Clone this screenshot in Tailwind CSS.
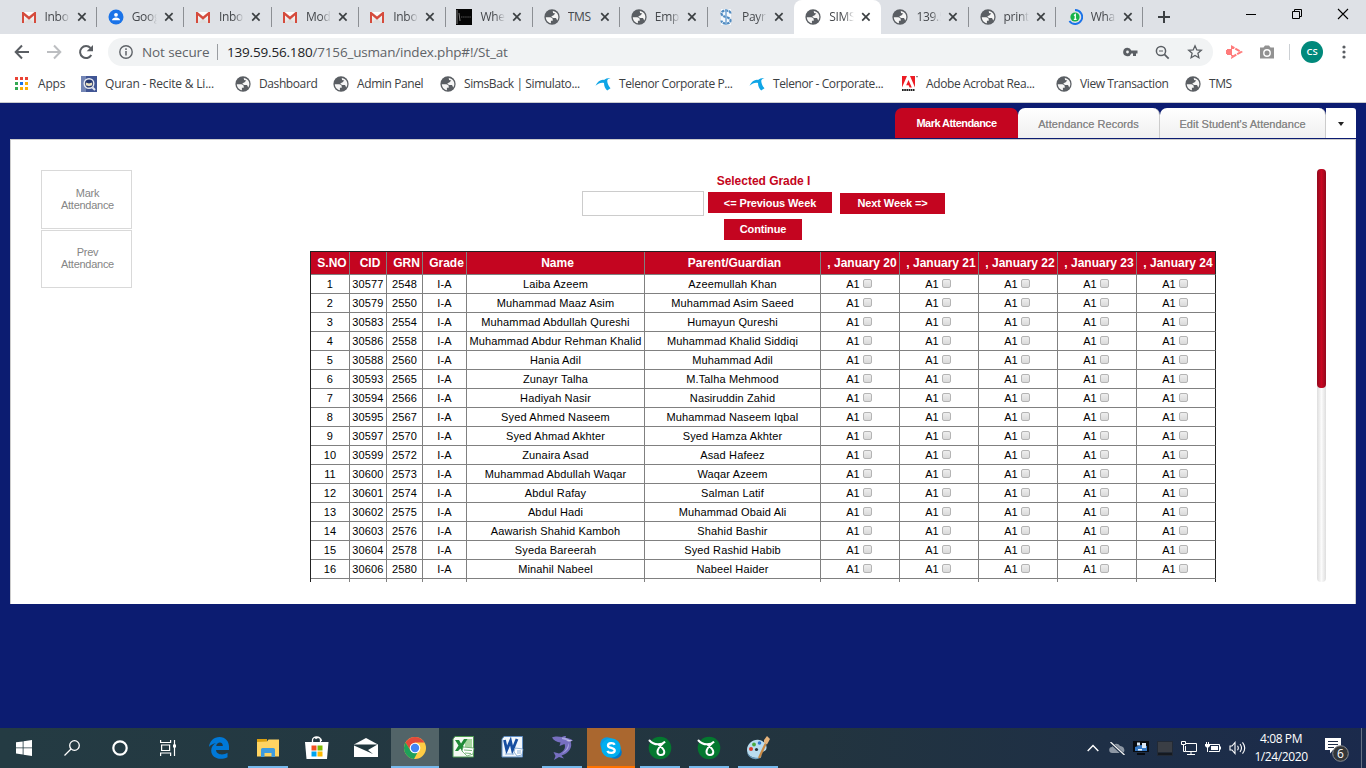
<!DOCTYPE html>
<html lang="en">
<head>
<meta charset="utf-8">
<title>SIMS - Mark Attendance</title>
<script src="https://cdn.jsdelivr.net/npm/@tailwindcss/browser@4"></script>
</head>
<body class="w-[1366px] h-[768px] overflow-hidden flex flex-col bg-[#0c1c71] font-['Open_Sans',sans-serif]">
<svg width="0" height="0" class="absolute">
  <defs>
    <linearGradient id="cam" x1="0" y1="0" x2="0" y2="1"><stop offset="0" stop-color="#fff"/><stop offset="1" stop-color="#e2e2e2"/></linearGradient>
    <symbol id="globe" viewBox="1 1 22 22"><circle cx="12" cy="12" r="10.500" fill="#5a5e63"/><path fill="#f6f6f6" d="M3.500 12.500h6c2 0 3.500 1.300 3.500 3V17h-2.500v3.700C6.500 20 3.500 16.500 3.500 12.500zM13 3.800c4.500.5 7.700 4 7.700 8.200 0 1.800-.6 3.500-1.500 4.700l-1.700-3.200h-4.300L11 11l2.800-1.200 2.700-2.600-3-.8z"/></symbol>
    <symbol id="gmail" viewBox="0 0 16 16"><path fill="url(#cam)" d="M1 3h14v11H1z"/><path fill="#dedede" d="M3 14l5-4.500L13 14z"/><path fill="#d54b3d" d="M1 3h1.500L8 7.500 13.500 3H15v11h-2V6.500L8 10.700 3 6.500V14H1z"/></symbol>
    <symbol id="contact" viewBox="0 0 16 16"><circle cx="8" cy="8" r="7.500" fill="#1a73e8"/><circle cx="8" cy="5.800" r="1.900" fill="#fff"/><path fill="#fff" d="M4 11.200c0-1.700 2-2.700 4-2.700s4 1 4 2.700z"/></symbol>
    <symbol id="black" viewBox="0 0 16 16"><path d="M0 0h16v16H0z" fill="#050505"/><path stroke="#999" stroke-width=".8" d="M1 1v14M3 4l1 8"/><path stroke="#555" stroke-dasharray="1.500 .6" d="M5 8h10"/></symbol>
    <symbol id="pay" viewBox="0 0 16 16"><path d="M3 0h10v16H3z" fill="#f4f8fc"/><path fill="none" stroke="#4f8ac0" stroke-width="2.200" stroke-dasharray="3 .7" d="M12.500 4.500c0-4-9-4-9 0s9 3 9 7-9 4-9 0"/><path stroke="#77a7d4" stroke-width="1.500" d="M8 0v16"/></symbol>
    <symbol id="wha" viewBox="0 0 16 16"><circle cx="8" cy="8" r="4.600" fill="#16b34a"/><path fill="none" stroke="#1a73e8" stroke-width="1.900" d="M8 1a7 7 0 1 1-5.600 11"/><path stroke="#fff" stroke-width="1.300" fill="none" d="M7 6.500l1.300-1V10.500M6.800 10.400h2.800"/></symbol>
    <symbol id="telenor" viewBox="0 0 16 16"><path fill="#0fa5e6" d="M.5 9.800C2.500 5.500 6 3.300 9 4c1.500-1.500 4-2.200 6.500-2-1.800.5-3 1.400-3.300 2.800.3 3 1.300 5.500 3.300 7.400l-3.300 2.300C10.200 13 9 10 9 7 6 6.200 3.500 7.500.5 9.800z"/></symbol>
    <symbol id="quran" viewBox="0 0 16 16"><path d="M0 0h16v16H0z" fill="#405594"/><path d="M0 0h5v16H0z" fill="#7385b4"/><circle cx="8" cy="7.500" r="4.800" fill="#25376f" stroke="#e5e8f0" stroke-width="1.400"/><path fill="#e8dfc0" d="M4.800 6.500L8 7.500l3.200-1v2.800L8 10.200 4.800 9.300z"/><path stroke="#e5e8f0" stroke-width="2" d="M11.500 11.500l2.500 2.500"/></symbol>
    <symbol id="apps" viewBox="0 0 16 16"><path fill="#ea4335" d="M1 1h3v3H1zM6 1h3v3H6zM11 1h3v3h-3z"/><path fill="#34a853" d="M1 6h3v3H1zM1 11h3v3H1z"/><path fill="#1a73e8" d="M6 6h3v3H6z"/><path fill="#fbaf05" d="M11 6h3v3h-3zM6 11h3v3H6zM11 11h3v3h-3z"/></symbol>
    <symbol id="adobe" viewBox="0 0 16 16"><path fill="#ed1c24" d="M0 0h5L0 11.500zM8 0h5v11.500zM6.500 4l3.300 7.500H7.600l-1-2.300H4.200z"/><path stroke="#222" stroke-width="2.200" stroke-dasharray="1.700 .5" d="M0 14h12.500"/><path stroke="#777" stroke-width="1" d="M14 .7h2"/></symbol>
    <symbol id="close" viewBox="0 0 10 10"><path stroke="#3c4043" stroke-width="1.700" d="M1.200 1.200l7.400 7.400M8.600 1.200L1.200 8.600"/></symbol>
    <symbol id="camt" viewBox="0 0 24 24"><circle cx="12" cy="12" r="11.300" fill="#04782f"/><path fill="none" stroke="#fff" stroke-width="2" stroke-linecap="round" d="M1.500 4.500C4 7.500 7 8.300 10 8.300c3.500 0 5.700-1 7-2.600-3 2.500-7.500 6-7.500 10.300 0 4.200 6.800 4 6.800 0 0-3.300-3-4.800-5.800-7.500"/></symbol>
  </defs>
</svg>

<!-- Tab strip -->
<header class="h-[34px] shrink-0 bg-[#dee1e6] flex pl-[9px]">
  <div id="tabs" class="flex h-full"></div>
  <svg class="w-[16px] h-[16px] mt-[9px] ml-[14px]" viewBox="0 0 16 16"><path stroke="#3c4043" stroke-width="2" d="M8 2v12M2 8h12"/></svg>
  <div class="ml-auto mt-[8px] mr-[17px] flex gap-[34px]">
    <svg class="w-[12px] h-[12px]" viewBox="0 0 12 12"><path stroke="#000" d="M1 6.500h10"/></svg>
    <svg class="w-[12px] h-[12px]" viewBox="0 0 12 12"><path fill="none" stroke="#000" d="M1.500 3.500h7v7h-7zM3.500 3.500v-2h7v7h-2"/></svg>
    <svg class="w-[12px] h-[12px]" viewBox="0 0 12 12"><path stroke="#000" stroke-width="1.100" d="M1 1l10 10M11 1L1 11"/></svg>
  </div>
</header>

<!-- Address bar -->
<div class="h-[36px] shrink-0 bg-white flex items-center pl-[14px]">
  <svg class="w-[16px] h-[16px]" viewBox="0 0 16 16"><path fill="none" stroke="#5a5e63" stroke-width="2" d="M15 8H2M8 1.500L1.700 8 8 14.500"/></svg>
  <svg class="w-[16px] h-[16px] ml-[16px]" viewBox="0 0 16 16"><path fill="none" stroke="#bcbec1" stroke-width="2" d="M1 8h13M8 1.500L14.300 8 8 14.500"/></svg>
  <svg class="w-[16px] h-[16px] ml-[16px]" viewBox="0 0 16 16"><path fill="none" stroke="#5a5e63" stroke-width="2" d="M13.300 11A6 6 0 1 1 12.500 4"/><path fill="#5a5e63" d="M15 1v6.300H8.700z"/></svg>
  <div class="ml-[14px] w-[1105px] h-[28px] rounded-full bg-[#f1f3f4] flex items-center pl-[11px] pr-[10px] text-[14px] text-[#5f6368] whitespace-nowrap">
    <svg class="w-[14px] h-[14px]" viewBox="0 0 14 14"><circle cx="7" cy="7" r="6.200" fill="none" stroke="#5f6368" stroke-width="1.400"/><path stroke="#5f6368" stroke-width="1.500" d="M7 6v4.500M7 3.300v1.600"/></svg>
    <span class="ml-[9px] w-[75px] text-[13.500px] tracking-[-0.1px]">Not secure</span>
    <i class="w-px h-[16px] bg-[#9a9da1]"></i>
    <span class="ml-[9px] text-[13.500px] tracking-[-0.18px]"><b class="font-normal text-[#202124]">139.59.56.180</b>/7156_usman/index.php#!/St_at</span>
    <svg class="ml-auto w-[15px] h-[10px]" viewBox="0 0 15 10"><path fill="#5a5e63" fill-rule="evenodd" d="M4.500.8A4.200 4.200 0 1 0 8.300 6.500H10V9h3V6.500h1.500v-3H8.300A4.200 4.200 0 0 0 4.500.8zm0 2.800a1.400 1.400 0 1 1 0 2.800 1.400 1.400 0 0 1 0-2.800z"/></svg>
    <svg class="ml-[17px] w-[15px] h-[15px]" viewBox="0 0 15 15"><circle cx="6" cy="6" r="4.600" fill="none" stroke="#5a5e63" stroke-width="1.500"/><path stroke="#5a5e63" stroke-width="1.700" d="M9.400 9.400l4.300 4.300"/><path stroke="#5a5e63" d="M4 6h4"/></svg>
    <svg class="ml-[17px] w-[16px] h-[16px]" viewBox="0 0 16 16"><path fill="none" stroke="#5a5e63" stroke-width="1.300" d="M8 1.800l1.800 4.100 4.500.4-3.400 3 1 4.400L8 11.400l-3.900 2.300 1-4.400-3.400-3 4.500-.4z"/></svg>
  </div>
  <svg class="ml-[13px] w-[17px] h-[14px]" viewBox="0 0 17 14"><path fill="#ff7b7b" d="M1 4h5v6H1zM0 5h1v4H0z"/><path fill="none" stroke="#ff7b7b" stroke-width="2" stroke-dasharray="5 1" d="M6 4V1.800L15 7l-9 5.200V10"/></svg>
  <svg class="ml-[16px] w-[16px] h-[14px]" viewBox="0 0 16 14"><path fill="#929292" d="M1 2.500h3.500L6 .5h4l1.500 2H15v11H1z"/><circle cx="8" cy="8" r="3.200" fill="none" stroke="#fff" stroke-width="1.400"/></svg>
  <i class="ml-[14px] w-px h-[16px] bg-[#ccd0d4]"></i>
  <div class="ml-[11px] w-[22px] h-[22px] rounded-full bg-[#00897b] text-white text-[9.500px] font-semibold flex items-center justify-center">CS</div>
  <svg class="ml-[19px] w-[4px] h-[14px]" viewBox="0 0 4 14"><g fill="#5a5e63"><circle cx="2" cy="2" r="1.600"/><circle cx="2" cy="7" r="1.600"/><circle cx="2" cy="12" r="1.600"/></g></svg>
</div>

<!-- Bookmarks bar -->
<nav id="marks" class="h-[33px] shrink-0 bg-white border-b border-[#c9cbce] pl-[14px] pb-[5px] flex items-center text-[12px] text-[#3c4043] whitespace-nowrap"></nav>

<!-- Application -->
<main class="h-[625px] shrink-0 px-[10px] pt-[5px] font-['Liberation_Sans',Arial,sans-serif]">
  <div class="flex h-[31px] justify-end text-[11px] text-[#858585] text-center leading-[32px] whitespace-nowrap">
    <div class="w-[123px] h-[30px] rounded-t-[7px] bg-[#c40520] font-bold text-white leading-[31px] tracking-[-0.55px]">Mark Attendance</div>
    <div class="w-[142px] h-[30px] rounded-t-[7px] bg-linear-to-b from-white to-[#f0f0f0] border-r border-[#ccc] tracking-[0.05px] [text-shadow:0_0_0.5px_#999]">Attendance Records</div>
    <div class="w-[166px] h-[30px] rounded-t-[7px] bg-linear-to-b from-white to-[#f0f0f0] border-r border-[#ccc] tracking-[0.02px] [text-shadow:0_0_0.5px_#999]">Edit Student's Attendance</div>
    <div class="w-[30px] h-[30px] rounded-tr-[3px] bg-white flex items-center justify-center"><i class="border-x-[3.500px] border-x-transparent border-t-[4px] border-t-[#222] mt-px"></i></div>
  </div>
  <section class="h-[465px] bg-white border border-b-0 border-[#ccc] flex pt-[29px] pl-[30px] pr-[29px]">
    <aside class="w-[91px] mt-px flex flex-col gap-px text-[11px] leading-[12px] text-[#858585] text-center tracking-[-0.27px]">
      <div class="h-[59px] border border-[#d9d9d9] flex items-center justify-center pl-[2px] pb-[2px]">Mark<br>Attendance</div>
      <div class="h-[58px] border border-[#d9d9d9] flex items-center justify-center pl-[2px] pb-[2px]">Prev<br>Attendance</div>
    </aside>
    <div class="ml-[178px] w-[906px] h-[413px] overflow-hidden flex flex-col">
      <div class="text-[12px] leading-[14px] font-bold text-[#c40520] text-center mt-[5px] mb-[3px] pl-px tracking-[-0.03px]">Selected Grade I</div>
      <div class="flex pl-[272px] text-[11px] font-bold text-white text-center leading-[22px] tracking-[-0.1px]">
        <div class="w-[122px] h-[25px] border border-[#ccc]"></div>
        <div class="ml-[4px] mt-px w-[124px] h-[21px] bg-[#c40520]">&lt;= Previous Week</div>
        <div class="ml-[8px] mt-[2px] w-[105px] h-[21px] bg-[#c40520] leading-[21px]">Next Week =&gt;</div>
      </div>
      <div class="ml-[414px] mt-[3px] w-[78px] h-[21px] bg-[#c40520] text-[11px] font-bold text-white text-center leading-[21px] tracking-[-0.15px]">Continue</div>
      <div id="table" class="mt-[11px] border-l border-t border-[#222] text-[11px] text-black"></div>
    </div>
    <div class="ml-auto w-[9px] h-[413px] rounded-[4px] bg-linear-to-r from-[#dedede] via-[#fbfbfb] to-[#dedede]">
      <div class="h-[219px] rounded-[4px] bg-linear-to-r from-[#93081c] via-[#c90722] to-[#93081c]"></div>
    </div>
  </section>
</main>

<!-- Taskbar -->
<footer class="h-[40px] shrink-0 flex bg-linear-to-r from-[#243b43] via-[#22343f] via-60% to-[#1b2a4c] text-white">
  <div class="flex w-[195px]">
    <div class="w-[48px] flex items-center justify-center"><svg class="w-[16px] h-[16px]" viewBox="0 0 16 16"><path fill="#fff" d="M0 2.300l6.700-.9v6.100H0zM7.500 1.300L16 0v7.500H7.500zM0 8.300h6.700v6.200L0 13.600zM7.500 8.300H16V16l-8.500-1.300z"/></svg></div>
    <div class="w-[48px] flex items-center justify-center"><svg class="w-[16px] h-[16px]" viewBox="0 0 16 16"><circle cx="10.500" cy="5.500" r="4.800" fill="none" stroke="#fff" stroke-width="1.300"/><path stroke="#fff" stroke-width="1.300" d="M7 9L.5 15.500"/></svg></div>
    <div class="w-[48px] flex items-center justify-center"><svg class="w-[16px] h-[16px]" viewBox="0 0 16 16"><circle cx="8" cy="8" r="6.700" fill="none" stroke="#fff" stroke-width="2.200"/></svg></div>
    <div class="w-[48px] flex items-center justify-center"><svg class="w-[17px] h-[16px]" viewBox="0 0 17 16"><path fill="none" stroke="#fff" stroke-width="1.200" d="M.6 0v2.500h10V0M.6 16v-3h10v3M1.600 5h8v5.500h-8zM14.500 0v16"/><path fill="#fff" d="M13 4.500h3v3h-3z"/></svg></div>
  </div>
  <div class="flex gap-px">
    <div class="w-[48px] flex flex-col items-center"><svg class="w-[22px] h-[22px] mt-[9px]" viewBox="0 0 22 22"><path fill="#0078d7" d="M1 10C1.500 4 6 0 11.500 0 17.500 0 21 4.500 21 9.500V13H8c.3 5 7.500 5.500 11.500 2.700v4.500C12 24 3.200 21 3.200 13.500c0-3.500 2-6 4.800-7.500C4.500 6.500 2 8.500 1 10zM8.200 9h6.600c.2-5-6.200-4.500-6.600 0z"/></svg></div>
    <div class="w-[48px] flex flex-col items-center"><svg class="w-[22px] h-[20px] mt-[10px]" viewBox="0 0 22 20"><path fill="#dba010" d="M0 1h10v3H0z"/><path fill="#ffd462" d="M0 4l10-.5L11.500 1.500H22V18.500H0z"/><path fill="#3e9cdf" d="M4 11.500q0-1.500 1.500-1.500h11q1.500 0 1.500 1.500V19h-3.500v-4h-7v4H4z"/></svg><i class="mt-auto w-[40px] h-[2px] bg-[#76b9ed]"></i></div>
    <div class="w-[48px] flex flex-col items-center"><svg class="w-[24px] h-[23px] mt-[8px]" viewBox="0 0 24 23"><path fill="none" stroke="#fff" stroke-width="1.300" d="M7.500 7V4c0-4 8-4 8 0v3M10.500 3c2-3 6-1 6 2"/><path fill="#fff" d="M0 6h23.500L22 23H1.500z"/><path fill="#f25022" d="M6.500 9.500h5v5h-5z"/><path fill="#7fba00" d="M12.500 9.500h5v5h-5z"/><path fill="#00a4ef" d="M6.500 15.500h5v5h-5z"/><path fill="#ffb900" d="M12.500 15.500h5v5h-5z"/></svg></div>
    <div class="w-[48px] flex flex-col items-center"><svg class="w-[24px] h-[20px] mt-[10px]" viewBox="0 0 24 20"><path fill="#fff" d="M0 6.500L12 0l12 6.500V19H0z"/><path fill="#22383f" d="M0 6.500h23.500L14 12l5 4L0 7.500z"/></svg></div>
    <div class="w-[48px] flex flex-col items-center bg-[#526468]"><svg class="w-[22px] h-[22px] mt-[9px]" viewBox="0 0 22 22"><circle cx="11" cy="11" r="11" fill="#fc4"/><path fill="#e24a3b" d="M1.500 5.500A11 11 0 0 1 20.500 5.500H11L6 13z"/><path fill="#1fa05a" d="M1.500 5.500L6.500 13.500l7 2L10 22A11 11 0 0 1 1.500 5.500z"/><circle cx="11" cy="11" r="5.300" fill="#fff"/><circle cx="11" cy="11" r="4.200" fill="#4285f4"/></svg><i class="mt-auto w-full h-[2px] bg-[#76b9ed]"></i></div>
    <div class="w-[48px] flex flex-col items-center pr-[2px]"><svg class="w-[23px] h-[22px] mt-[8px]" viewBox="0 0 23 22"><path fill="#f5faf4" stroke="#4c9a52" stroke-width="1" d="M3 .5h18.500v20.500H1V3z"/><path fill="#a6d59f" d="M13 3h7v9h-7z"/><path fill="#208b37" d="M3 4h4l2 3.500L12 3h3.500l-4.500 7 3.500 6h-4l-2-3.500L6 15H3l3.500-5.500z"/><path fill="#fff" stroke="#4c9a52" stroke-width=".7" d="M11 11l11 1-1 6-6 2-5-5z"/><path stroke="#78b579" d="M12 14l8 .5M13 17l6 .5"/></svg></div>
    <div class="w-[48px] flex flex-col items-center pr-[2px]"><svg class="w-[23px] h-[22px] mt-[8px]" viewBox="0 0 23 22"><path fill="#f2f7fd" stroke="#5f8dc2" stroke-width="1" d="M3 .5h18.500v20.500H1V3z"/><path fill="none" stroke="#164da0" stroke-width="2.800" d="M3.500 4l2.200 10L9.500 5l2 9L16 3"/><path fill="#fff" stroke="#5f8dc2" stroke-width=".7" d="M14 12l8 1-1 6-5 1-3-4z"/><path stroke="#8bb0db" d="M4 18h9M16 15h4M16 17h4"/></svg></div>
    <div class="w-[48px] flex flex-col items-center"><svg class="w-[22px] h-[24px] mt-[8px]" viewBox="0 0 22 24"><path fill="#776fc1" d="M1 1.500C4 0 8 .5 11 1c2-1 3.500-1 4-.8L14.500 2C18 2 20 3 22 4.800l-2.500.4c2.500 6-1.500 12-9 14.300l2.500 3-5-1.500-5 3 1.500-4-2-4 5.500 1.500c5-2 7-5.500 5.500-9.500L8.500 10l1-3.500C6 6 2.500 4.500 1 1.500z"/><path fill="#a9a6e2" d="M11 1.500c4 0 7 1.500 8 3.500-3-1.200-6-1-8-2z"/><path fill="#fff" d="M15 4.500h6l-1 .7h-3z"/><path fill="#a9a6e2" d="M17.500 7c1.500 5-2 8.500-6.500 10.500C15 14.500 17 11 17.500 7z"/></svg><i class="mt-auto w-[40px] h-[2px] bg-[#76b9ed]"></i></div>
    <div class="w-[48px] flex flex-col items-center bg-[#aa672f]"><svg class="w-[22px] h-[22px] mt-[9px]" viewBox="0 0 22 22"><circle cx="7" cy="7" r="6.800" fill="#0c9be0"/><circle cx="15" cy="15" r="6.800" fill="#0078ca"/><circle cx="11" cy="11" r="9.800" fill="#00aff0"/><path fill="none" stroke="#fff" stroke-width="2.300" d="M14.700 7.800C13.500 5.500 8 5.700 8 8.500c0 3.200 6.700 1.700 6.700 5 0 3-6 3.200-7.400.5"/></svg><i class="mt-auto w-full h-[2px] bg-[#ff7200]"></i></div>
    <div class="w-[48px] flex flex-col items-center"><svg class="w-[24px] h-[24px] mt-[8px]"><use href="#camt"/></svg><i class="mt-auto w-[40px] h-[2px] bg-[#76b9ed]"></i></div>
    <div class="w-[48px] flex flex-col items-center"><svg class="w-[24px] h-[24px] mt-[8px]"><use href="#camt"/></svg><i class="mt-auto w-[40px] h-[2px] bg-[#76b9ed]"></i></div>
    <div class="w-[48px] flex flex-col items-center"><svg class="w-[24px] h-[24px] mt-[8px]" viewBox="0 0 24 24"><path fill="#b9dcf0" d="M1 14C1 8 7 3 13 4c5 1 8 4 7.500 8-.5 4-4 3-5 5s1 4-2 5C7 23 1 19.500 1 14z"/><path fill="#6e9fc0" d="M1 15c1 5 6 7.500 12.500 6.500-1 1.500-3 2-5 1.500C4 22.500 1 19 1 15z"/><circle cx="5" cy="13" r="2" fill="#e03a2a"/><circle cx="8" cy="8.500" r="1.900" fill="#49a83f"/><circle cx="13.500" cy="7" r="1.800" fill="#3478cf"/><circle cx="10.500" cy="13.500" r="1.600" fill="#22343f"/><path stroke="#c98a45" stroke-width="2.200" d="M19.500 8L13 22"/><path fill="#e6b47c" d="M18 4l3-4 3 3-3 5.500-3-1.500z"/></svg><i class="mt-auto w-[40px] h-[2px] bg-[#76b9ed]"></i></div>
  </div>
  <div class="ml-auto flex items-center">
    <div class="flex items-center w-[168px]">
      <div class="w-[24px] flex justify-center"><svg class="w-[12px] h-[8px]" viewBox="0 0 12 8"><path fill="none" stroke="#fff" stroke-width="1.400" d="M.7 7L6 1.500 11.300 7"/></svg></div>
      <div class="w-[24px] flex justify-center"><svg class="w-[17px] h-[13px]" viewBox="0 0 17 13"><path fill="#8d97a4" d="M3.500 11a3 3 0 0 1-.5-6C4 1.500 9 .5 11 4c4-.5 6.500 6 2 7z"/><path stroke="#1d2e45" stroke-width="3" d="M1 0l14 13"/><path stroke="#f4f4f4" stroke-width="1.300" d="M1.500 0l14 13"/></svg></div>
      <div class="w-[24px] flex justify-center"><svg class="w-[16px] h-[14px]" viewBox="0 0 16 14"><path fill="#080b10" d="M0 0h16v11H0zM4 12h8v2H4z"/><path fill="#3579c6" d="M2 6l6-2 6 1v5H2z"/><path fill="#dce9f5" d="M4 1.500h3v3H4zM9 2h4v5H9z"/><path fill="#e5f5ff" d="M5 8h4v1.500H5z"/></svg></div>
      <div class="w-[24px] flex justify-center"><svg class="w-[16px] h-[15px]" viewBox="0 0 16 15"><path fill="#222a36" d="M0 0h16v15H0z"/><path fill="#3a3e45" d="M1 1h14v10H1z"/><path fill="#15191f" d="M1 12h14v2H1z"/></svg></div>
      <div class="w-[24px] flex justify-center"><svg class="w-[16px] h-[14px]" viewBox="0 0 16 14"><path fill="none" stroke="#fff" d="M5 2.500h10.500v8H4.500V5M10 10.500v3M6 13.500h8M.5.500h4v3h-4zM2.500 4v6.500h2"/></svg></div>
      <div class="w-[24px] flex justify-center"><svg class="w-[16px] h-[12px]" viewBox="0 0 16 12"><path fill="none" stroke="#fff" d="M5 2.500h9.500v7H4M2.500 5v5M1.500 0v2M3.500 0v2"/><path fill="#fff" d="M0 2h5v2L3.500 5.500h-2L0 4zM6 4h7v4H6zM15 4.500h1v3h-1z"/></svg></div>
      <div class="w-[24px] flex justify-center"><svg class="w-[17px] h-[14px]" viewBox="0 0 17 14"><path fill="none" stroke="#fff" stroke-width="1.100" d="M1 5h2l3-3.500v11L3 9H1zM8.500 4.800q1.600 2.200 0 4.400M11 3q3 4 0 8M13.500 1.300q4.500 5.700 0 11.400"/></svg></div>
    </div>
    <div class="w-[64px] text-center text-[12px] leading-[18px] tracking-[-0.4px] whitespace-nowrap pb-px">4:08 PM<br>1/24/2020</div>
    <svg class="w-[26px] h-[26px] ml-[12px] mt-[4px]" viewBox="0 0 26 26"><path fill="#fff" d="M0 1h16v12H8l-3 3.500V13H0z"/><path stroke="#1e2d48" d="M3 4.500h10M3 7.500h10M3 10.500h6"/><circle cx="15.500" cy="16.500" r="7.800" fill="#343638" stroke="#8a8d91"/><text x="15.500" y="21" font-size="12" text-anchor="middle" fill="#fff" font-family="Open Sans">6</text></svg>
    <i class="w-px h-[40px] bg-[#667184] ml-[10px] mr-[4px]"></i>
  </div>
</footer>

<script>
const tabs = [['gmail','Inbo'],['contact','Goog'],['gmail','Inbo'],['gmail','Mod'],['gmail','Inbo'],['black','Whe'],['globe','TMS'],['globe','Emp'],['pay','Payr'],['globe','SIMS'],['globe','139.5'],['globe','print'],['wha','Wha']];
document.getElementById('tabs').innerHTML = tabs.map(([icon, label], i) => `
  <div class="${i === 9 ? 'bg-white rounded-t-[8px]' : ''} relative w-[87.200px] h-full flex items-center pl-[11.500px]">
    <svg class="w-[16px] h-[16px] shrink-0"><use href="#${icon}"/></svg>
    <span class="ml-[8px] w-[25px] h-[18px] overflow-hidden whitespace-nowrap text-[12px] leading-[18px] tracking-[-0.3px] text-[#45484c] ${label === 'TMS' ? '' : 'mask-r-from-60%'}">${label}</span>
    <svg class="ml-[7px] w-[10px] h-[10px]"><use href="#close"/></svg>
    ${i === 8 || i === 9 ? '' : '<i class="absolute right-[-1px] top-[7px] w-px h-[20px] bg-[#8c8f94]"></i>'}
  </div>`).join('');

const marks = [['apps','Apps',67],['quran','Quran - Recite &amp; Li...',154],['globe','Dashboard',98],['globe','Admin Panel',107],['globe','SimsBack | Simulato...',155],['telenor','Telenor Corporate P...',154],['telenor','Telenor - Corporate...',153],['adobe','Adobe Acrobat Rea...',154],['globe','View Transaction',129],['globe','TMS',80]];
document.getElementById('marks').innerHTML = marks.map(([icon, label, w]) => `
  <div class="flex items-center gap-[8px] shrink-0 ${w === 67 || label.startsWith('Quran') ? 'tracking-[-0.2px]' : 'tracking-[-0.4px]'}" style="width:${w}px"><svg class="w-[16px] h-[16px] shrink-0"><use href="#${icon}"/></svg>${label}</div>`).join('');

const rows = [[30577,2548,'Laiba Azeem','Azeemullah Khan'],[30579,2550,'Muhammad Maaz Asim','Muhammad Asim Saeed'],[30583,2554,'Muhammad Abdullah Qureshi','Humayun Qureshi'],[30586,2558,'Muhammad Abdur Rehman Khalid','Muhammad Khalid Siddiqi'],[30588,2560,'Hania Adil','Muhammad Adil'],[30593,2565,'Zunayr Talha','M.Talha Mehmood'],[30594,2566,'Hadiyah Nasir','Nasiruddin Zahid'],[30595,2567,'Syed Ahmed Naseem','Muhammad Naseem Iqbal'],[30597,2570,'Syed Ahmad Akhter','Syed Hamza Akhter'],[30599,2572,'Zunaira Asad','Asad Hafeez'],[30600,2573,'Muhammad Abdullah Waqar','Waqar Azeem'],[30601,2574,'Abdul Rafay','Salman Latif'],[30602,2575,'Abdul Hadi','Muhammad Obaid Ali'],[30603,2576,'Aawarish Shahid Kamboh','Shahid Bashir'],[30604,2578,'Syeda Bareerah','Syed Rashid Habib'],[30606,2580,'Minahil Nabeel','Nabeel Haider']];
const head = ['S.NO','CID','GRN','Grade','Name','Parent/Guardian',', January 20',', January 21',', January 22',', January 23',', January 24'];
const line = (cells) => `<div class="grid grid-cols-[39px_37px_36px_44px_178px_176px_79px_79px_79px_79px_79px] h-[19px] leading-[18px] text-center whitespace-nowrap">${cells.map(c => `<div class="border-r border-b border-[#808080] last:border-r-[#222] tracking-[0.14px]">${c}</div>`).join('')}</div>`;
const box = 'A1<i class="inline-block w-[9px] h-[9px] ml-[3px] mr-[2px] rounded-[2px] border border-[#b4b4b4] bg-linear-to-b from-[#eee] to-[#dadada]"></i>';
document.getElementById('table').innerHTML =
  `<div class="grid grid-cols-[39px_37px_36px_44px_178px_176px_79px_79px_79px_79px_79px] h-[23px] leading-[22px] text-center whitespace-nowrap text-[12px] font-bold text-white bg-[#c40520]">${head.map(h => `<div class="border-r border-b border-[#808080] last:border-r-[#222] pl-[4px]">${h}</div>`).join('')}</div>` +
  rows.map(([c, g, n, p], i) => line([i + 1, c, g, 'I-A', n, p, box, box, box, box, box])).join('') + line(['','','','','','','','','','','']);
</script>
</body>
</html>
